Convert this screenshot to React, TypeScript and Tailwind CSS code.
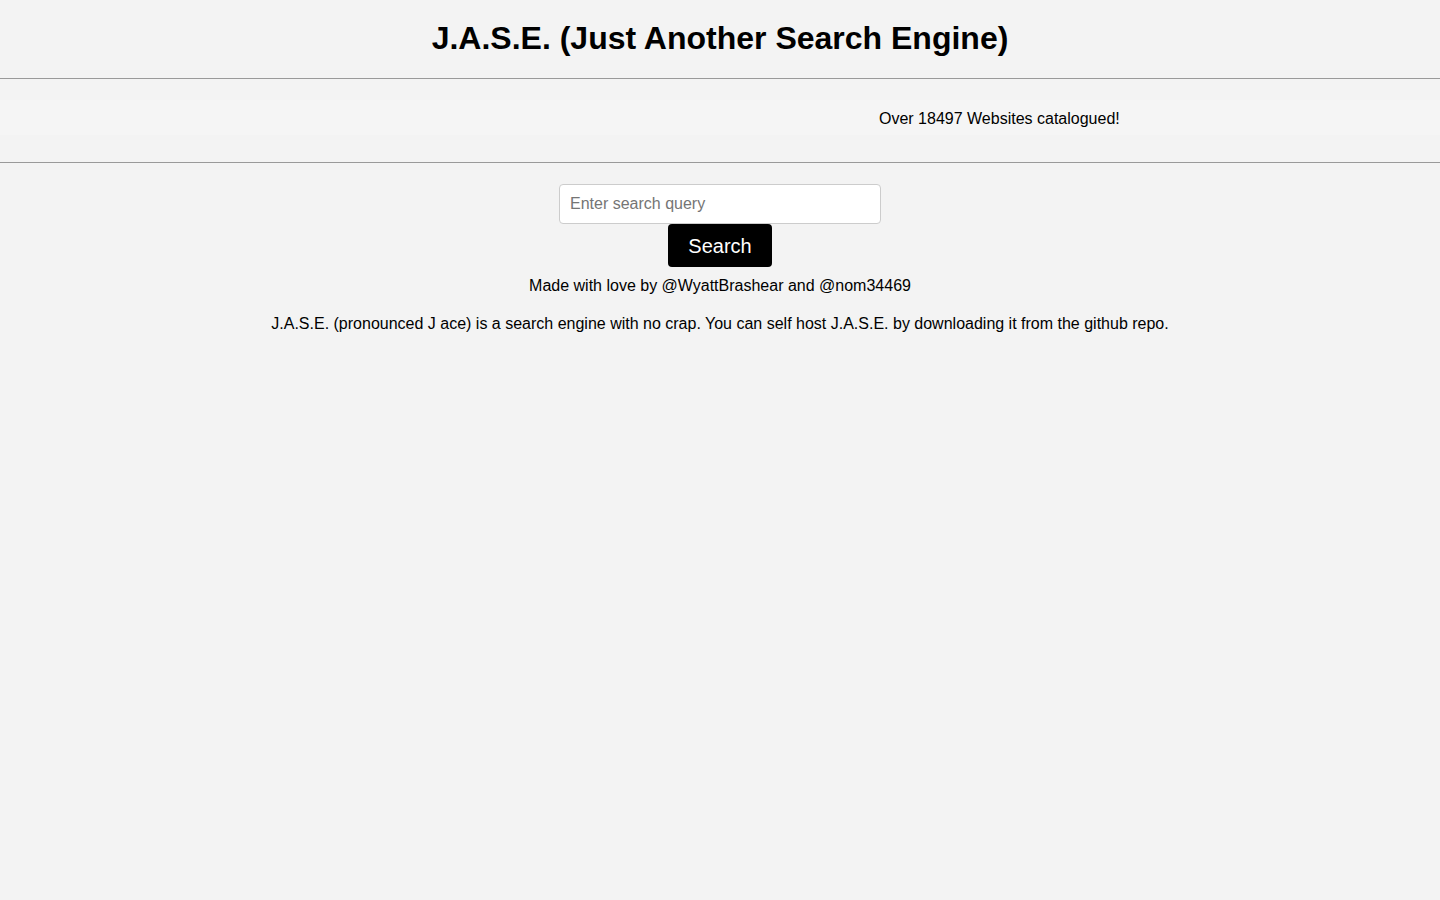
export default function App() {
  return (
    <div className="min-h-screen bg-[#f3f3f3] text-black font-['Liberation_Sans',Arial,sans-serif]">
      <h1 className="pt-[20px] h-[78px] text-center text-[32px] font-bold leading-[37px]">
        J.A.S.E. (Just Another Search Engine)
      </h1>
      <div className="border-t border-[#999]" />
      <div className="h-[83px] pt-[21px]">
        <div className="h-[35px] bg-[#f5f5f5] flex items-center pt-[2px]">
          <span className="ml-[879px] text-[16px] leading-[18px] whitespace-nowrap">Over 18497 Websites catalogued!</span>
        </div>
      </div>
      <div className="border-t border-[#999]" />
      <div className="flex flex-col items-center pt-[21px]">
        <input
          type="text"
          placeholder="Enter search query"
          className="w-[322px] h-[40px] bg-white border border-[#ccc] rounded-[4px] px-[10px] text-[16px] placeholder:text-[#757575] outline-none"
        />
        <button className="w-[104px] h-[43px] bg-black text-white text-[20px] rounded-[4px]">Search</button>
        <p className="mt-[10px] text-[16px] leading-[18px]">Made with love by @WyattBrashear and @nom34469</p>
        <p className="mt-[20px] text-[16px] leading-[18px]">
          J.A.S.E. (pronounced J ace) is a search engine with no crap. You can self host J.A.S.E. by downloading it from the github repo.
        </p>
      </div>
    </div>
  );
}
